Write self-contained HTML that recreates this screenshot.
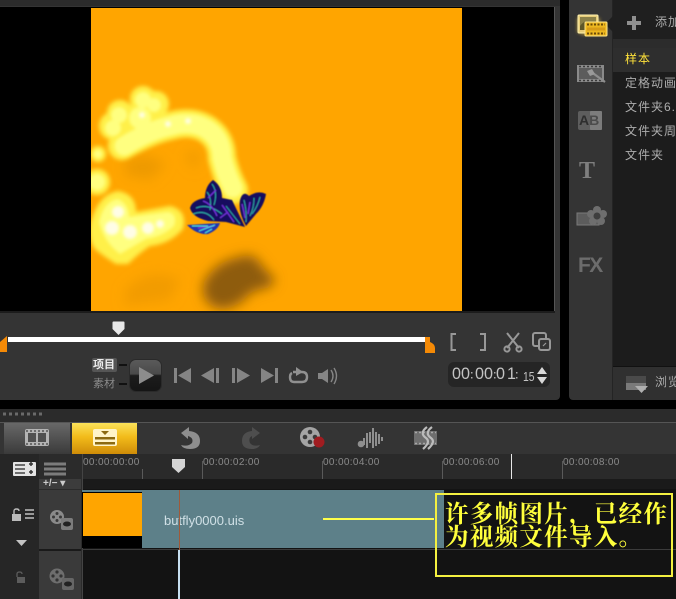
<!DOCTYPE html>
<html><head><meta charset="utf-8">
<style>
html,body{margin:0;padding:0;background:#000}
#p{position:relative;width:676px;height:599px;overflow:hidden;background:#000;font-family:"Liberation Sans","Noto Sans CJK SC",sans-serif}
#p div{position:absolute}
.t{white-space:nowrap}
.l{left:625px;font:12px/15px "Liberation Sans","Noto Sans CJK SC",sans-serif;color:#adadad;letter-spacing:1px}
.r{top:457px;font:10px/12px "Liberation Sans",sans-serif;color:#8a8a8a;letter-spacing:.35px}
.d{top:365px;font:17px/18px "Liberation Sans",sans-serif;color:#c4c4c4;letter-spacing:0;transform:scaleX(.95);transform-origin:0 0}
svg{position:absolute;overflow:visible}
</style></head><body><div id="p">
<!-- player panel -->
<div style="left:0;top:0;width:560px;height:400px;background:#343434;border-radius:0 0 4px 0"></div>
<div style="left:0;top:0;width:560px;height:6px;background:#2b2b2b"></div>
<div style="left:0;top:7px;width:555px;height:305px;background:#000;border-right:1px solid #555;box-sizing:border-box"></div>
<div style="left:0;top:311px;width:555px;height:2px;background:#1c1c1c"></div>
<div style="left:91px;top:8px;width:371px;height:303px;background:#ffa500"></div>
<svg style="left:91px;top:8px" width="371" height="303" viewBox="91 8 371 303">
<defs>
<filter id="g" x="-20%" y="-20%" width="140%" height="140%"><feGaussianBlur stdDeviation="1.6"/></filter>
<filter id="g2" x="-20%" y="-20%" width="140%" height="140%"><feGaussianBlur stdDeviation="2.2"/></filter>
<filter id="b1" x="-40%" y="-40%" width="180%" height="180%"><feGaussianBlur stdDeviation="6"/></filter>
<filter id="b2" x="-40%" y="-40%" width="180%" height="180%"><feGaussianBlur stdDeviation="6"/></filter>
<filter id="s" x="-10%" y="-10%" width="120%" height="120%"><feGaussianBlur stdDeviation="0.4"/></filter>
<clipPath id="c"><rect x="91" y="8" width="371" height="303"/></clipPath>
</defs>
<g clip-path="url(#c)">
<path d="M204 282 Q215 262 236 258 Q250 252 258 260 Q264 270 276 280 L268 288 Q250 290 244 300 Q225 314 212 306 Q200 298 204 282Z" fill="#8e5c08" filter="url(#b1)"/>
<path d="M125 290 Q150 265 180 280 L170 300 L125 306Z" fill="#f29b04" filter="url(#b2)"/>
<path d="M125 160 Q150 150 165 165 L150 180 L125 175Z M185 155 L200 150 L195 170 Z" fill="#ee9a06" filter="url(#b2)"/>
<g filter="url(#g2)">
<path d="M122 146 Q150 130 170 126 Q190 120 205 128 Q222 138 222 158 Q226 175 234 190" fill="none" stroke="#fff04a" stroke-width="28" stroke-linecap="round" stroke-linejoin="round"/>
<g fill="#fff04a">
<circle cx="143" cy="99" r="13"/><circle cx="156" cy="104" r="13"/><circle cx="120" cy="113" r="13"/><circle cx="113" cy="126" r="14"/><circle cx="140" cy="118" r="16"/><circle cx="128" cy="142" r="14"/><circle cx="98" cy="154" r="8"/><circle cx="97" cy="182" r="13"/>
<path d="M92 218 Q100 194 118 191 Q136 194 136 212 L170 206 Q188 210 183 229 Q170 244 150 246 Q138 254 128 264 L116 264 Q100 254 94 248 Q86 234 92 218Z"/>
</g>
</g>
<g filter="url(#g)">
<path d="M124 146 Q150 130 170 126 Q190 120 205 128 Q222 138 222 158 Q226 175 233 188" fill="none" stroke="#ffff80" stroke-width="19" stroke-linecap="round"/>
<g fill="#ffff80">
<circle cx="143" cy="100" r="8"/><circle cx="154" cy="105" r="7"/><circle cx="140" cy="118" r="11"/><circle cx="119" cy="115" r="8"/><circle cx="113" cy="128" r="8"/><circle cx="97" cy="182" r="8"/><circle cx="98" cy="154" r="4"/>
<path d="M99 222 Q104 201 118 199 Q129 204 129 217 L168 212 Q178 214 174 226 Q162 237 146 239 Q132 247 120 254 Q104 242 99 222Z"/>
</g>
</g>
<g fill="#fffde6" filter="url(#g)">
<circle cx="118" cy="212" r="6"/><circle cx="112" cy="228" r="7"/><circle cx="130" cy="232" r="7"/><circle cx="148" cy="228" r="6"/><circle cx="160" cy="224" r="4"/><circle cx="168" cy="124" r="3"/><circle cx="188" cy="121" r="3"/><circle cx="142" cy="115" r="3"/>
</g>
<g filter="url(#s)">
<path d="M213 180 Q222 186 222 198 L232 200 L245 227 L226 222 L208 221 Q192 217 190 208 Q192 200 205 198 Q205 186 213 180Z" fill="#14105e"/>
<path d="M240 200 Q243 190 249 196 Q258 190 266 194 Q264 206 256 214 L246 226 Q238 212 240 200Z" fill="#14105e"/>
<path d="M187 225 L220 223 Q218 230 208 234 Q197 235 187 225Z" fill="#2136b0"/>
<g fill="none" stroke="#2fa8a8" stroke-width="1">
<path d="M212 184 Q218 192 214 205 M207 192 Q212 198 210 210 M196 208 Q208 203 222 214 M193 214 Q206 209 214 220 M226 206 L240 224 M244 200 Q247 212 246 222 M254 198 Q254 208 250 216 M260 197 Q258 206 252 214"/>
</g>
<g fill="none" stroke="#6f30d8" stroke-width="1.4">
<path d="M203 201 Q212 204 217 216 M222 205 L234 222 M228 212 L220 218 M242 204 Q244 212 245 218 M250 202 L248 214 M198 228 L214 226 M216 190 L208 198"/>
</g>
<path d="M192 226 L208 226 M199 231 L215 225 M205 233 L212 229" fill="none" stroke="#50e0e0" stroke-width="1.1"/>
</g>
</g>
</svg>
<!-- scrubber -->
<svg style="left:112px;top:321px" width="13" height="15"><path d="M0.5 1.5 Q0.5 0.5 1.5 0.5 H11.5 Q12.5 0.5 12.5 1.5 V8 L6.5 14 L0.5 8Z" fill="#e8e8e8"/></svg>
<div style="left:8px;top:337px;width:418px;height:5px;background:#fff"></div>
<svg style="left:0;top:335px" width="9" height="20"><path d="M0 7 L7 1 V17 H0Z" fill="#f58a06"/></svg>
<svg style="left:424px;top:336px" width="14" height="20"><path d="M1 1 L6 1 L6 6 Q11 8 11 12 V17 H1Z" fill="#f58a06"/></svg>
<!-- bracket, scissors, copy -->
<svg style="left:448px;top:330px" width="106" height="26" fill="none" stroke="#989898" stroke-width="2">
<path d="M8 4 H3.5 V20 H8"/><path d="M32 4 H37 V20 H32"/>
<path d="M59 3 L71 18 M71 3 L59 18"/><circle cx="59" cy="19" r="2.6"/><circle cx="71" cy="19" r="2.6"/>
<rect x="85" y="3" width="13" height="13" rx="2"/><rect x="91" y="9" width="11" height="11" rx="2" fill="#343434"/><path d="M95 16 L98 13" stroke-width="1.2"/>
</svg>
<!-- timecode -->
<div style="left:448px;top:362px;width:102px;height:25px;background:#252525;border-radius:6px"></div>
<div class="t d" style="left:452px">00</div>
<div class="t d" style="left:475px">00</div>
<div class="t d" style="left:496px">0</div>
<div class="t d" style="left:507px">1</div>
<svg style="left:470px;top:370px" width="50" height="10" fill="#a8a8a8"><rect x="1" y="2" width="1.5" height="1.5"/><rect x="1" y="7" width="1.5" height="1.5"/><rect x="24" y="2" width="1.5" height="1.5"/><rect x="24" y="7" width="1.5" height="1.5"/><rect x="46" y="2" width="1.5" height="1.5"/><rect x="46" y="7" width="1.5" height="1.5"/></svg>
<div class="t" style="left:523px;top:369px;font:13px/15px 'Liberation Sans',sans-serif;color:#c4c4c4;transform:scaleX(.8);transform-origin:0 0">15</div>
<svg style="left:536px;top:365px" width="14" height="20"><path d="M1 9 L6 2 L11 9Z M1 12 H11 L6 19Z" fill="#d8d8d8"/></svg>
<!-- project / clip -->
<div style="left:92px;top:358px;width:25px;height:14px;background:#555;border-radius:2px"></div>
<div class="t" style="left:93px;top:358px;font:bold 11px/14px 'Liberation Sans','Noto Sans CJK SC',sans-serif;color:#eee">项目</div>
<div class="t" style="left:93px;top:377px;font:11px/14px 'Liberation Sans','Noto Sans CJK SC',sans-serif;color:#8c8c8c">素材</div>
<div style="left:119px;top:364px;width:8px;height:2px;background:#111"></div>
<div style="left:119px;top:383px;width:8px;height:2px;background:#111"></div>
<div style="left:130px;top:360px;width:31px;height:31px;border-radius:6px;background:linear-gradient(#5a5a5a 0,#4a4a4a 45%,#1c1c1c 50%,#151515 100%);box-shadow:0 0 0 1px #2a2a2a"></div>
<svg style="left:139px;top:367px" width="16" height="18"><path d="M0 0 L15 8.5 L0 17Z" fill="#8c8c8c"/></svg>
<!-- transport -->
<svg style="left:170px;top:364px" width="170" height="24" fill="#858585">
<path d="M4 4 H7 V19 H4Z M21 4 V19 L8 11.5Z"/>
<path d="M31 11.5 L44 4 V19Z M46 4 H49 V19 H46Z"/>
<path d="M62 4 H65 V19 H62Z M67 4 L80 11.5 L67 19Z"/>
<path d="M91 4 L104 11.5 L91 19Z M105 4 H108 V19 H105Z"/>
<path d="M123 8 H132 Q137 8 137 13 T132 18 H124 Q120 18 120 13 Q120 10 122 9" fill="none" stroke="#909090" stroke-width="2.4"/>
<path d="M126 3 L133 8 L126 12Z" fill="#909090"/>
<path d="M148 9 H152 L158 5 V19 L152 15 H148Z"/>
<path d="M161 6 Q165 12 161 18 M164 4 Q169 12 164 20" fill="none" stroke="#858585" stroke-width="1.4"/>
</svg>
<!-- right panel -->
<div style="left:569px;top:0;width:107px;height:400px;background:#343434;border-radius:0 0 0 4px"></div>
<div style="left:612px;top:0;width:64px;height:400px;background:#2b2b2b;border-left:1px solid #242424"></div>
<div style="left:613px;top:0;width:63px;height:39px;background:#1f1f1f"></div>
<div style="left:613px;top:39px;width:63px;height:9px;background:#2c2c2c"></div>
<div style="left:613px;top:48px;width:63px;height:318px;background:#1c1c1c"></div>
<div style="left:613px;top:48px;width:63px;height:24px;background:#2e2e2e"></div>
<div style="left:613px;top:366px;width:63px;height:34px;background:#303030;border-top:1px solid #111;box-sizing:border-box"></div>
<svg style="left:604px;top:16px" width="9" height="16"><path d="M9 0 L1 8 L9 16Z" fill="#1f1f1f"/></svg>
<svg style="left:626px;top:15px" width="16" height="16"><path d="M6 1 H10 V6 H15 V10 H10 V15 H6 V10 H1 V6 H6Z" fill="#8f8f8f"/></svg>
<div class="t" style="left:655px;top:15px;font:12px/15px 'Liberation Sans','Noto Sans CJK SC',sans-serif;color:#aaa;letter-spacing:1px">添加</div>
<div class="t l" style="top:52px;color:#ffe23a">样本</div>
<div class="t l" style="top:76px">定格动画</div>
<div class="t l" style="top:100px">文件夹6.</div>
<div class="t l" style="top:124px">文件夹周</div>
<div class="t l" style="top:148px">文件夹</div>
<svg style="left:625px;top:375px" width="24" height="20"><path d="M1 1 H21 V15 H1Z" fill="#7a7a7a"/><path d="M1 1 H21 V8 H1Z" fill="#4a4a4a"/><path d="M10 11 H23 L16.5 18Z" fill="#b0b0b0"/></svg>
<div class="t" style="left:655px;top:375px;font:12px/15px 'Liberation Sans','Noto Sans CJK SC',sans-serif;color:#aaa;letter-spacing:1px">浏览</div>
<!-- side icons -->
<svg style="left:570px;top:8px" width="42" height="32">
<path d="M7 10 H30 V17 H34 V27 H12 L7 24Z" fill="#e8c040" opacity=".55" filter="url(#g)"/>
<rect x="8" y="7" width="20" height="18" rx="1" fill="#e6cc78" stroke="#fff2b0"/>
<path d="M10 9 H26 V22 H10Z" fill="#8a8048"/>
<path d="M10 18 Q16 10 22 16 L26 14 V22 H10Z" fill="#5e5628"/>
<rect x="15" y="14" width="22" height="14" rx="1" fill="#edb71f" stroke="#ffe68a"/>
<path d="M17 16.5 H35 M17 25.5 H35" stroke="#6a4a08" stroke-width="2" stroke-dasharray="2 1.5"/>
<path d="M17 19.5 H35 V22.5 H17Z" fill="#d89c18"/>
</svg>
<svg style="left:570px;top:60px" width="42" height="30">
<rect x="7" y="5" width="27" height="17" fill="#8a8a8a"/><rect x="9" y="8" width="23" height="11" fill="#5c5c5c"/>
<path d="M9 6.5 H33 M9 20.5 H33" stroke="#3a3a3a" stroke-width="1.5" stroke-dasharray="2 2"/>
<path d="M20 11 L35 22" stroke="#8e8e8e" stroke-width="2.2"/><path d="M22 9 L25 14 L20 16 L17 11Z" fill="#999"/>
</svg>
<svg style="left:570px;top:108px" width="42" height="26"><rect x="8" y="3" width="24" height="19" rx="2" fill="#5e5e5e"/><rect x="20" y="3" width="12" height="19" rx="1" fill="#7c7c7c"/></svg>
<div class="t" style="left:579px;top:113px;font:bold 14px/14px 'Liberation Sans',sans-serif;color:#2e2e2e">A<span style="color:#4b4b4b">B</span></div>
<div class="t" style="left:579px;top:158px;font:bold 24px/26px 'Liberation Serif',serif;color:#7f7f7f">T</div>
<svg style="left:570px;top:202px" width="42" height="28">
<rect x="7" y="11" width="22" height="12" fill="#5c5c5c" stroke="#7a7a7a"/>
<g fill="#6e6e6e"><circle cx="27" cy="8" r="4"/><circle cx="21" cy="12" r="4"/><circle cx="33" cy="12" r="4"/><circle cx="23" cy="19" r="4"/><circle cx="31" cy="19" r="4"/></g><circle cx="27" cy="14" r="3.5" fill="#3e3e3e"/>
</svg>
<div class="t" style="left:578px;top:254px;font:bold 21px/24px 'Liberation Sans',sans-serif;color:#6c6c6c;letter-spacing:-1.6px">FX</div>
<!-- timeline top bars -->
<div style="left:0;top:409px;width:676px;height:14px;background:#2b2b2b"></div>
<svg style="left:2px;top:412px" width="42" height="5"><path d="M1 2 H41" stroke="#6a6a6a" stroke-width="3" stroke-dasharray="3 3"/></svg>
<div style="left:0;top:422px;width:676px;height:2px;background:#555"></div>
<div style="left:0;top:423px;width:676px;height:31px;background:#343434"></div>
<div style="left:4px;top:423px;width:66px;height:31px;background:linear-gradient(#686868,#3a3a3a)"></div>
<div style="left:72px;top:423px;width:65px;height:31px;background:linear-gradient(#fbe25a 0,#f2bb1a 45%,#cf8c08 100%)"></div>
<svg style="left:4px;top:423px" width="134" height="31">
<rect x="21" y="6" width="24" height="17" rx="2" fill="#b4b4b4"/><rect x="24" y="10" width="8" height="9" fill="#505050"/><rect x="34" y="10" width="8" height="9" fill="#505050"/>
<path d="M22 8 H44 M22 21 H44" stroke="#555" stroke-width="1.4" stroke-dasharray="2 2"/>
<rect x="89" y="6" width="24" height="17" rx="2" fill="#fff4c8"/><rect x="91" y="14" width="20" height="2.5" fill="#8c6a10"/><rect x="91" y="19" width="20" height="2.5" fill="#8c6a10"/><path d="M97 8 H105 L101 12Z" fill="#8c6a10"/>
</svg>
<!-- toolbar icons -->
<svg style="left:170px;top:424px" width="290" height="30">
<path d="M11 9 L19 3 V7 Q30 8 30 17 Q30 25 20 25 Q13 25 11 21 Q18 23 22 19 Q24 14 18 12 V15Z" fill="#8e8e8e"/>
<path d="M90 9 L82 3 V7 Q72 8 72 17 Q72 25 82 25 Q88 25 90 21 Q83 23 80 19 Q78 14 82 12 V15Z" fill="#4e4e4e"/>
<circle cx="140" cy="13" r="10" fill="#a4a4a4"/><g fill="#3a3a3a"><circle cx="140" cy="8" r="2.3"/><circle cx="135" cy="13" r="2.3"/><circle cx="145" cy="13" r="2.3"/><circle cx="140" cy="18" r="2.3"/></g><circle cx="149" cy="18" r="5.5" fill="#a01c20"/>
<path d="M194 21 V14 M197 24 V9 M200 19 V8 M203 24 V4 M206 22 V8 M209 20 V10 M212 17 V13" stroke="#8f8f8f" stroke-width="2"/><circle cx="191" cy="20" r="3.3" fill="#8f8f8f"/><path d="M191 20 H194" stroke="#8f8f8f"/>
<rect x="244" y="7" width="23" height="14" fill="#6e6e6e"/><path d="M245 8.5 H266 M245 19.5 H266" stroke="#a8a8a8" stroke-width="1.5" stroke-dasharray="2 2"/><path d="M257 3 Q249 9 256 14 Q261 18 253 25 M262 3 Q254 9 261 14 Q266 18 258 25" fill="none" stroke="#bcbcbc" stroke-width="2.2"/>
</svg>
<!-- timeline left -->
<div style="left:0;top:454px;width:676px;height:145px;background:#131313"></div>
<div style="left:0;top:454px;width:82px;height:145px;background:#2b2b2b"></div>
<div style="left:0;top:454px;width:39px;height:145px;background:#262626"></div>
<div style="left:39px;top:490px;width:42px;height:109px;background:#3a3a3a"></div>
<div style="left:39px;top:549px;width:42px;height:2px;background:#1a1a1a"></div>
<div style="left:39px;top:479px;width:42px;height:10px;background:#3c3c3c"></div>
<div class="t" style="left:43px;top:478px;font:bold 10px/11px 'Liberation Sans',sans-serif;color:#ccc">+/− ▾</div>
<div style="left:13px;top:462px;width:23px;height:14px;background:#e4e4e4;border-radius:1px"></div>
<svg style="left:13px;top:462px" width="56" height="16">
<path d="M2 3 H12 M2 7 H12 M2 11 H12" stroke="#444" stroke-width="1.5"/><path d="M16 2 H20 M18 0 V4 M16 10 H20 M18 8 V12" stroke="#333" stroke-width="1.5"/>
<path d="M31 2 H53 M31 7 H53 M31 12 H53" stroke="#7c7c7c" stroke-width="3"/>
</svg>
<svg style="left:10px;top:508px" width="26" height="14"><rect x="2" y="6" width="9" height="7" fill="#bbb"/><path d="M4 6 V3 Q4 1 6.5 1 Q9 1 9 3" fill="none" stroke="#bbb" stroke-width="1.4"/><path d="M15 2 H24 M15 6 H24 M15 10 H24" stroke="#999" stroke-width="2"/></svg>
<svg style="left:16px;top:540px" width="12" height="7"><path d="M0 0 H11 L5.5 6Z" fill="#c4c4c4"/></svg>
<svg style="left:14px;top:571px" width="14" height="13"><rect x="3" y="6" width="8" height="6" fill="#5c5c5c"/><path d="M3 6 V3 Q3 1 5.5 1 Q8 1 8 3" fill="none" stroke="#5c5c5c" stroke-width="1.3"/></svg>
<svg style="left:48px;top:508px" width="28" height="24"><circle cx="9" cy="9" r="7" fill="#8a8a8a"/><g fill="#3a3a3a"><circle cx="9" cy="5.5" r="1.5"/><circle cx="5.5" cy="9" r="1.5"/><circle cx="12.5" cy="9" r="1.5"/><circle cx="9" cy="12.5" r="1.5"/></g><rect x="13" y="10" width="12" height="12" rx="2" fill="#7c7c7c"/><ellipse cx="19" cy="16" rx="4" ry="2.5" fill="#222"/></svg>
<svg style="left:47px;top:566px" width="30" height="28"><circle cx="10" cy="10" r="7.5" fill="#6e6e6e"/><g fill="#333"><circle cx="10" cy="6" r="1.6"/><circle cx="6" cy="10" r="1.6"/><circle cx="14" cy="10" r="1.6"/><circle cx="10" cy="14" r="1.6"/></g><rect x="15" y="12" width="12" height="12" rx="2" fill="#666"/><ellipse cx="21" cy="18" rx="4" ry="2.5" fill="#222"/></svg>
<!-- ruler -->
<div style="left:82px;top:454px;width:594px;height:25px;background:#2a2a2a"></div>
<div style="left:82px;top:479px;width:594px;height:10px;background:#1a1a1a"></div>
<div style="left:82px;top:454px;width:1px;height:145px;background:#444"></div>
<div class="t r" style="left:83px">00:00:00:00</div>
<div class="t r" style="left:203px">00:00:02:00</div>
<div class="t r" style="left:323px">00:00:04:00</div>
<div class="t r" style="left:443px">00:00:06:00</div>
<div class="t r" style="left:563px">00:00:08:00</div>
<svg style="left:82px;top:454px" width="594" height="25"><path d="M60.5 15 V25 M120.5 7 V25 M240.5 7 V25 M360.5 7 V25 M480.5 7 V25" stroke="#5a5a5a"/><path d="M429.5 0 V25" stroke="#e8e8e8"/></svg>
<svg style="left:172px;top:459px" width="13" height="15"><path d="M0 0 H13 V8 L6.5 14 L0 8Z" fill="#d4d4d4"/></svg>
<!-- clip -->
<div style="left:82px;top:490px;width:362px;height:58px;background:#5d8089"></div>
<div style="left:82px;top:549px;width:594px;height:1px;background:#3c3c3c"></div>
<div style="left:82px;top:492px;width:60px;height:56px;background:#000"></div>
<div style="left:83px;top:493px;width:59px;height:43px;background:#ffa500"></div>
<div class="t" style="left:164px;top:513px;font:13px/16px 'Liberation Sans',sans-serif;color:#d0e0e6">butfly0000.uis</div>
<div style="left:179px;top:490px;width:1px;height:60px;background:#a05a3a"></div>
<div style="left:178px;top:550px;width:2px;height:49px;background:#c6dff0"></div>
<!-- annotation -->
<div style="left:323px;top:518px;width:111px;height:2px;background:#ffff4a"></div>
<div style="left:435px;top:493px;width:238px;height:84px;border:2px solid #f4f040;box-sizing:border-box"></div>
<div class="t" style="left:445px;top:503px;font:bold 23.6px/24px 'Liberation Serif','Noto Serif CJK SC',serif;color:#ffff3c;letter-spacing:1.2px">许多帧图片，已经作</div>
<div class="t" style="left:445px;top:526px;font:bold 23.6px/24px 'Liberation Serif','Noto Serif CJK SC',serif;color:#ffff3c;letter-spacing:1.2px">为视频文件导入。</div>
</div></body></html>
